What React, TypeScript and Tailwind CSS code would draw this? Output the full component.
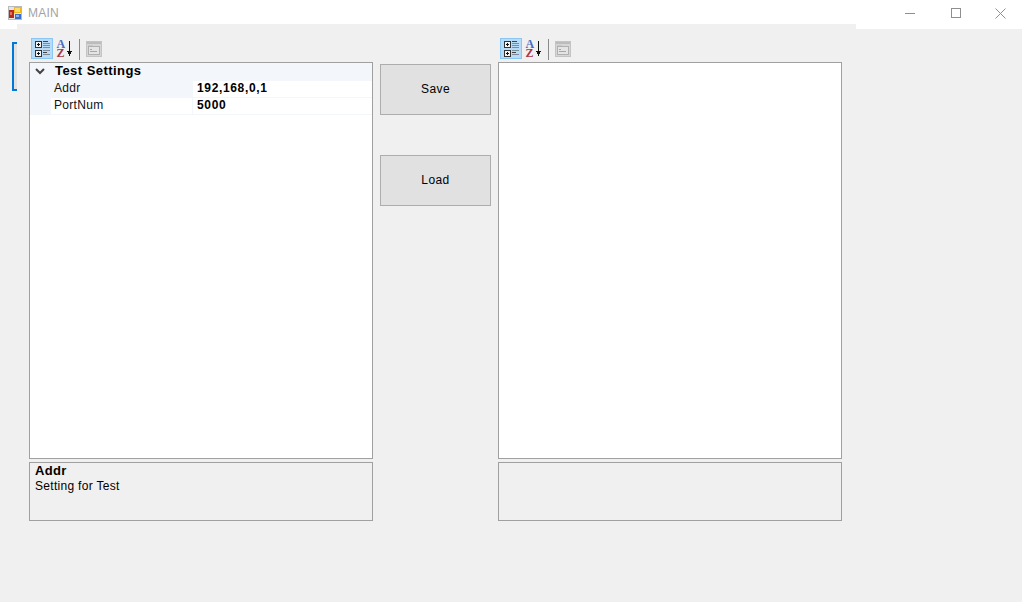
const FONT = "font-['Liberation_Sans',Arial,sans-serif]";

function CategorizedIcon() {
  return (
    <svg width="22" height="21" viewBox="0 0 22 21" shapeRendering="crispEdges">
      <rect x="0.5" y="0.5" width="21" height="20" fill="#b8dcf7" stroke="#8cc6f5" />
      {[3, 12].map((y) => (
        <g key={y}>
          <rect x="4.5" y={y + 0.5} width="6" height="6" fill="#f4f4f4" stroke="#333" />
          <rect x="6" y={y + 3} width="3" height="1" fill="#111" />
          <rect x="7" y={y + 2} width="1" height="3" fill="#111" />
        </g>
      ))}
      {[3, 5, 7, 9].map((y) => (
        <rect key={y} x="12" y={y} width={y === 3 ? 5 : 7} height="1" fill={y === 3 ? "#444" : "#7d8c99"} />
      ))}
      <rect x="12" y="12" width="7" height="1" fill="#7d8c99" />
      <rect x="12" y="14" width="4" height="1" fill="#444" />
      <rect x="12" y="16" width="7" height="1" fill="#7d8c99" />
    </svg>
  );
}

function AlphaIcon() {
  return (
    <svg width="22" height="21" viewBox="0 0 22 21">
      <text x="3.5" y="10" fontSize="12" fontWeight="700" fontFamily="Liberation Serif" fill="#4a6cc0">A</text>
      <text x="3.5" y="19" fontSize="12" fontWeight="700" fontFamily="Liberation Serif" fill="#a5384a">Z</text>
      <g shapeRendering="crispEdges" fill="#111">
        <rect x="16" y="3" width="1" height="14" />
        <rect x="14" y="13" width="5" height="1" />
        <rect x="15" y="14" width="3" height="2" />
        <rect x="16" y="16" width="1" height="2" />
      </g>
    </svg>
  );
}

function PagesIcon() {
  return (
    <svg width="16" height="16" viewBox="0 0 16 16" shapeRendering="crispEdges">
      <rect x="0" y="0" width="16" height="16" fill="#c4c4c4" />
      <rect x="1" y="1" width="14" height="14" fill="#d6d6d6" />
      <rect x="1" y="1" width="14" height="2" fill="#bcbcbc" />
      <rect x="2" y="4" width="5" height="2" fill="#c8c8c8" />
      <rect x="2" y="6" width="12" height="7" fill="#e4e4e4" />
      <rect x="2" y="5" width="12" height="1" fill="#b0b0b0" />
      <rect x="2" y="13" width="12" height="1" fill="#b0b0b0" />
      <rect x="2" y="5" width="1" height="9" fill="#b0b0b0" />
      <rect x="13" y="5" width="1" height="9" fill="#b0b0b0" />
      <rect x="4" y="8" width="2" height="1" fill="#a6a6a6" />
      <rect x="4" y="10" width="7" height="1" fill="#a6a6a6" />
    </svg>
  );
}

function Toolbar() {
  return (
    <div className="mt-[9px] flex h-[24px] items-start pl-[2px]">
      <CategorizedIcon />
      <AlphaIcon />
      <div className="ml-[4px] mt-[1px] h-[21px] w-px bg-[#8a8a8a]" />
      <div className="ml-[6px] mt-[3px]">
        <PagesIcon />
      </div>
    </div>
  );
}

function Row({ name, value, selected }: { name: string; value: string; selected?: boolean }) {
  return (
    <div className="flex h-[17px] border-b border-[#f3f6fb] text-[12px] leading-[15px]">
      <div className="w-[21px] bg-[#f3f6fb]" />
      <div className={`w-[141px] pl-[3px] tracking-[0.3px] text-[#111] ${selected ? "bg-[#f3f6fb]" : "bg-white"}`}>{name}</div>
      <div className="flex-1 border-l border-[#f3f6fb] pl-[4px] font-bold tracking-[0.65px] text-black">{value}</div>
    </div>
  );
}

function PropertyGrid({ filled }: { filled?: boolean }) {
  return (
    <div className="flex w-[344px] flex-col">
      <Toolbar />
      <div className="h-[397px] border border-[#a0a0a0] bg-white">
        {filled && (
          <>
            <div className="flex h-[18px] items-center bg-[#f3f6fb] pb-[3px] text-[13px] font-bold tracking-[0.45px] text-black">
              <svg width="20" height="15" viewBox="0 0 20 15" className="ml-[1px]">
                <path d="M5 6l4 4 4-4" fill="none" stroke="#444" strokeWidth="2" />
              </svg>
              <span className="ml-[4px]">Test Settings</span>
            </div>
            <Row name="Addr" value="192,168,0,1" selected />
            <Row name="PortNum" value="5000" />
          </>
        )}
      </div>
      <div className="mt-[3px] h-[59px] border border-[#a0a0a0] pl-[5px] text-[12px] tracking-[0.3px] text-black">
        {filled && (
          <>
            <div className="h-[16px] text-[13px] leading-[15px] font-bold">Addr</div>
            <div className="leading-[15px]">Setting for Test</div>
          </>
        )}
      </div>
    </div>
  );
}

function ActionButton({ label }: { label: string }) {
  return (
    <button className="flex h-[51px] w-[111px] items-center justify-center border border-[#adadad] bg-[#e1e1e1] pb-[2px] text-[12px] tracking-[0.4px] text-black">
      {label}
    </button>
  );
}

export default function App() {
  return (
    <div className={`relative flex h-[602px] w-[1022px] flex-col overflow-hidden bg-[#f0f0f0] ${FONT}`}>
      <div className="flex h-[24px] items-center bg-white pt-[2px]">
        <svg width="14" height="14" viewBox="0 0 14 14" className="ml-[8px]" shapeRendering="crispEdges">
          <rect x="0" y="0" width="14" height="14" fill="#b9b9b9" />
          <rect x="1" y="1" width="12" height="12" fill="#e4e4e4" />
          <rect x="6" y="1" width="7" height="6" fill="#f0b820" />
          <rect x="7" y="2" width="5" height="4" fill="#fbdc68" />
          <rect x="1" y="4" width="5" height="8" fill="#b52a20" />
          <rect x="2" y="6" width="2" height="3" fill="#e8705c" />
          <rect x="7" y="8" width="6" height="5" fill="#3a6ec8" />
          <rect x="8" y="9" width="3" height="2" fill="#8fb4ea" />
        </svg>
        <span className="ml-[6px] text-[12px] tracking-[0.2px] text-[#a3a3a3]">MAIN</span>
        <div className="ml-auto flex h-full items-center">
          <div className="flex w-[46px] justify-center">
            <div className="h-px w-[10px] bg-[#8f8f8f]" />
          </div>
          <div className="flex w-[45px] justify-center">
            <div className="h-[10px] w-[10px] border border-[#8f8f8f]" />
          </div>
          <div className="flex w-[44px] justify-center">
            <svg width="11" height="11" viewBox="0 0 11 11">
              <path d="M0.5 0.5l10 10M10.5 0.5l-10 10" stroke="#8f8f8f" strokeWidth="1" fill="none" />
            </svg>
          </div>
        </div>
      </div>
      <div className="flex h-[5px]">
        <div className="w-[17px] bg-white" />
        <div className="w-[839px] bg-[#f0f0f0]" />
        <div className="flex-1 bg-white" />
      </div>
      <div className="flex pl-[29px]">
        <PropertyGrid filled />
        <div className="mx-[7px] flex flex-col gap-[40px] pt-[35px]">
          <ActionButton label="Save" />
          <ActionButton label="Load" />
        </div>
        <PropertyGrid />
      </div>
      <div className="absolute left-[12px] top-[42px] h-[49px] w-[5px] border-y-2 border-l-2 border-[#0078d7] bg-[#e1e1e1]" />
    </div>
  );
}
